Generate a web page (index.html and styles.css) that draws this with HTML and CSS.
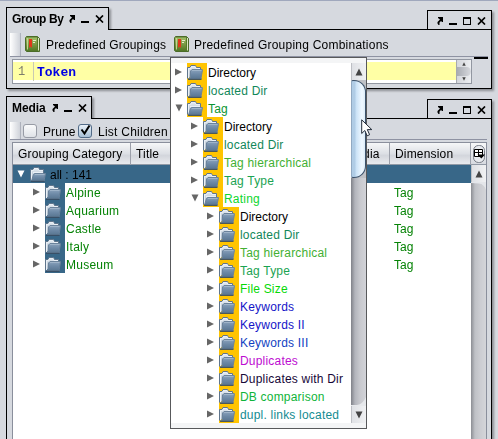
FILE: index.html
```html
<!DOCTYPE html>
<html lang="en">
<head>
<meta charset="utf-8">
<title>Media browser</title>
<link rel="stylesheet" href="styles.css">
</head>
<body>
<svg class="defs" width="0" height="0">
  <defs>
    <linearGradient id="front" x1="0" y1="0" x2="0" y2="1"><stop offset="0" stop-color="#8ba3bd"/><stop offset=".5" stop-color="#6d89a6"/><stop offset="1" stop-color="#587590"/></linearGradient>
    <linearGradient id="back" x1="0" y1="0" x2="0" y2="1"><stop offset="0" stop-color="#e9eff5"/><stop offset="1" stop-color="#9fb0c1"/></linearGradient>
    <linearGradient id="cover" x1="0" y1="0" x2="0" y2="1"><stop offset="0" stop-color="#a3bd68"/><stop offset="1" stop-color="#567c26"/></linearGradient>
    <symbol id="folder" viewBox="0 0 16 16">
      <path d="M.5 14.500V3.500H3L4 1.500H8.500L9.500 3.500H13.500V6" fill="url(#back)" stroke="#5f758c"/>
      <path d="M1.500 14V4.500H3.500L4.500 2.500H8L9 4.500H13" fill="none" stroke="#eaf0f6"/>
      <path d="M1.500 15L3.500 13V7L5 5.500H15.300V7L14.200 13.500V15Z" fill="url(#front)" stroke="#6b839c"/>
      <path d="M1 15.300H14.500" stroke="#33475c"/>
      <path d="M5 6.500H14.500" stroke="#9fb4c9"/>
    </symbol>
    <symbol id="folder-open" viewBox="0 0 16 16">
      <path d="M.5 14.500V3.500H3L4 1.500H8.500L9.500 3.500H13.500V8" fill="url(#back)" stroke="#5f758c"/>
      <path d="M1.500 14V4.500H3.500L4.500 2.500H8L9 4.500H13M3 6.500H13" fill="none" stroke="#eaf0f6"/>
      <path d="M1.500 15L3.500 8.500L4.500 7.500H15.500L14.300 13.500V15Z" fill="url(#front)" stroke="#6b839c"/>
      <path d="M1 15.300H14.500" stroke="#33475c"/>
      <path d="M5 8.500H14.500" stroke="#9fb4c9"/>
    </symbol>
    <symbol id="book" viewBox="0 0 15 16">
      <path d="M.5 2L1.500.5H12.500L14.500 2.500V15.500H1.500L.5 14.500Z" fill="#557a2b" stroke="#4b6c28"/>
      <path d="M13.500 2V14.500" stroke="#dbe7bd"/>
      <path d="M1 1.500H12V14H1Z" fill="url(#cover)"/>
      <path d="M2.500 2V13.500" stroke="#c1d48f"/>
      <path d="M4 3H7V12L5.500 10.500L4 12Z" fill="#e0371b"/>
      <path d="M8 4.500H11M8 6.500H10" stroke="#e4edcb"/>
    </symbol>
    <symbol id="detach" viewBox="0 0 6 8"><path d="M1 0H6V5H5L4 4L2.500 5.500V8H1.500L.5 6.500V5L3 2.500L1 1Z"/></symbol>
    <symbol id="min" viewBox="0 0 8 8"><path d="M0 6H8V8H0Z"/></symbol>
    <symbol id="max" viewBox="0 0 8 8"><path d="M0 0H8V8H0ZM1 2V7H7V2Z" fill-rule="evenodd"/></symbol>
    <symbol id="close" viewBox="0 0 9 8"><path d="M1 .5L8 7.500M8 .5L1 7.500" stroke="#000" stroke-width="1.700"/></symbol>
    <symbol id="right" viewBox="0 0 8 8"><path d="M0 .5L7 4L0 7.500Z" fill="#666"/></symbol>
    <symbol id="down" viewBox="0 0 8 8"><path d="M.5 .5H7.500L4 7.500Z" fill="currentColor"/></symbol>
    <symbol id="up" viewBox="0 0 8 8"><path d="M.5 7.500H7.500L4 .5Z" fill="currentColor"/></symbol>
  </defs>
</svg>

<section class="panel group">
  <header class="tabs">
    <div class="tab"><b>Group By</b><svg class="i-detach"><use href="#detach"/></svg><svg class="i-min"><use href="#min"/></svg><svg class="i-close"><use href="#close"/></svg></div>
    <div class="rule"></div>
    <div class="controls"><svg class="i-detach"><use href="#detach"/></svg><svg class="i-min"><use href="#min"/></svg><svg class="i-max"><use href="#max"/></svg><svg class="i-close"><use href="#close"/></svg></div>
  </header>
  <div class="body">
    <div class="toolbar">
      <i class="handle"></i>
      <svg class="book"><use href="#book"/></svg><span class="t1">Predefined Groupings</span>
      <svg class="book"><use href="#book"/></svg><span class="t2">Predefined Grouping Combinations</span>
    </div>
    <div class="edit-row">
      <div class="editor">
        <span class="line-no">1</span><code>Token</code>
        <div class="mini-scroll"><svg><use href="#up"/></svg><i></i><svg><use href="#down"/></svg></div>
      </div>
      <i class="dash"></i>
    </div>
  </div>
</section>

<section class="panel media">
  <header class="tabs">
    <div class="tab"><b>Media</b><svg class="i-detach"><use href="#detach"/></svg><svg class="i-min"><use href="#min"/></svg><svg class="i-close"><use href="#close"/></svg></div>
    <div class="rule"></div>
    <div class="controls"><svg class="i-detach"><use href="#detach"/></svg><svg class="i-min"><use href="#min"/></svg><svg class="i-max"><use href="#max"/></svg><svg class="i-close"><use href="#close"/></svg></div>
  </header>
  <div class="body">
    <div class="toolbar">
      <i class="handle"></i>
      <i class="check"></i><span class="prune">Prune</span>
      <i class="check on"><svg viewBox="0 0 14 14"><path d="M3.500 6.500L6.500 10.500L11.500 2.500" fill="none" stroke="#000" stroke-width="2"/></svg></i><span class="list">List Children</span>
    </div>
    <div class="table">
      <div class="main">
        <div class="thead"><span>Grouping Category</span><span>Title</span><span class="mid">Media</span><span>Dimension</span></div>
        <div class="row root"><svg class="arrow"><use href="#down"/></svg><svg class="folder"><use href="#folder-open"/></svg><span>all : 141</span></div>
        <div class="row"><svg class="arrow"><use href="#right"/></svg><i class="cell"><svg class="folder"><use href="#folder"/></svg></i><span class="name">Alpine</span><span>Tag</span></div>
        <div class="row"><svg class="arrow"><use href="#right"/></svg><i class="cell"><svg class="folder"><use href="#folder"/></svg></i><span class="name">Aquarium</span><span>Tag</span></div>
        <div class="row"><svg class="arrow"><use href="#right"/></svg><i class="cell"><svg class="folder"><use href="#folder"/></svg></i><span class="name">Castle</span><span>Tag</span></div>
        <div class="row"><svg class="arrow"><use href="#right"/></svg><i class="cell"><svg class="folder"><use href="#folder"/></svg></i><span class="name">Italy</span><span>Tag</span></div>
        <div class="row"><svg class="arrow"><use href="#right"/></svg><i class="cell"><svg class="folder"><use href="#folder"/></svg></i><span class="name">Museum</span><span>Tag</span></div>
      </div>
      <div class="side">
        <div class="corner"><svg viewBox="0 0 12 18"><rect x=".5" y=".5" width="11" height="17" rx="5" fill="#e9ebef" stroke="#777c86"/><path d="M1.500 4.500H9.500V11.500H1.500ZM1.500 7.500H9.500M5.500 4.500V11.500" fill="#fff" stroke="#000"/><path d="M4.500 9.500H12L8.250 13.500Z"/></svg></div>
        <div class="sbtn"><svg><use href="#up"/></svg></div>
        <div class="track"><svg viewBox="0 0 15 9"><path d="M0 0H15V8Q13 2 8 1.500L0 1Z" fill="#e4e6ea"/></svg></div>
      </div>
    </div>
  </div>
</section>

<div class="popup">
  <div class="items">
    <div class="item"><svg class="arrow"><use href="#right"/></svg><i class="cell"><svg class="folder"><use href="#folder"/></svg></i><span class="black">Directory</span></div>
    <div class="item"><svg class="arrow"><use href="#right"/></svg><i class="cell"><svg class="folder"><use href="#folder"/></svg></i><span class="sea">located Dir</span></div>
    <div class="item"><svg class="arrow"><use href="#down"/></svg><i class="cell"><svg class="folder"><use href="#folder-open"/></svg></i><span class="green">Tag</span></div>
    <div class="item l2"><svg class="arrow"><use href="#right"/></svg><i class="cell"><svg class="folder"><use href="#folder"/></svg></i><span class="black">Directory</span></div>
    <div class="item l2"><svg class="arrow"><use href="#right"/></svg><i class="cell"><svg class="folder"><use href="#folder"/></svg></i><span class="sea">located Dir</span></div>
    <div class="item l2"><svg class="arrow"><use href="#right"/></svg><i class="cell"><svg class="folder"><use href="#folder"/></svg></i><span class="leaf">Tag hierarchical</span></div>
    <div class="item l2"><svg class="arrow"><use href="#right"/></svg><i class="cell"><svg class="folder"><use href="#folder"/></svg></i><span class="jade">Tag Type</span></div>
    <div class="item l2"><svg class="arrow"><use href="#down"/></svg><i class="cell"><svg class="folder"><use href="#folder-open"/></svg></i><span class="bright">Rating</span></div>
    <div class="item l3"><svg class="arrow"><use href="#right"/></svg><i class="cell"><svg class="folder"><use href="#folder"/></svg></i><span class="black">Directory</span></div>
    <div class="item l3"><svg class="arrow"><use href="#right"/></svg><i class="cell"><svg class="folder"><use href="#folder"/></svg></i><span class="sea">located Dir</span></div>
    <div class="item l3"><svg class="arrow"><use href="#right"/></svg><i class="cell"><svg class="folder"><use href="#folder"/></svg></i><span class="leaf">Tag hierarchical</span></div>
    <div class="item l3"><svg class="arrow"><use href="#right"/></svg><i class="cell"><svg class="folder"><use href="#folder"/></svg></i><span class="jade">Tag Type</span></div>
    <div class="item l3"><svg class="arrow"><use href="#right"/></svg><i class="cell"><svg class="folder"><use href="#folder"/></svg></i><span class="lime">File Size</span></div>
    <div class="item l3"><svg class="arrow"><use href="#right"/></svg><i class="cell"><svg class="folder"><use href="#folder"/></svg></i><span class="blue">Keywords</span></div>
    <div class="item l3"><svg class="arrow"><use href="#right"/></svg><i class="cell"><svg class="folder"><use href="#folder"/></svg></i><span class="blue">Keywords II</span></div>
    <div class="item l3"><svg class="arrow"><use href="#right"/></svg><i class="cell"><svg class="folder"><use href="#folder"/></svg></i><span class="azure">Keywords III</span></div>
    <div class="item l3"><svg class="arrow"><use href="#right"/></svg><i class="cell"><svg class="folder"><use href="#folder"/></svg></i><span class="magenta">Duplicates</span></div>
    <div class="item l3"><svg class="arrow"><use href="#right"/></svg><i class="cell"><svg class="folder"><use href="#folder"/></svg></i><span class="ink">Duplicates with Dir</span></div>
    <div class="item l3"><svg class="arrow"><use href="#right"/></svg><i class="cell"><svg class="folder"><use href="#folder"/></svg></i><span class="grass">DB comparison</span></div>
    <div class="item l3"><svg class="arrow"><use href="#right"/></svg><i class="cell"><svg class="folder"><use href="#folder"/></svg></i><span class="teal">dupl. links located</span></div>
  </div>
  <div class="bar">
    <div class="sbtn"><svg><use href="#up"/></svg></div>
    <div class="thumb"></div>
    <div class="groove"><svg viewBox="0 0 15 9"><path d="M0 9V8H6Q12 7 15 0V9Z" fill="#e6e8eb"/></svg></div>
    <div class="sbtn"><svg><use href="#down"/></svg></div>
  </div>
</div>
<svg class="cursor" viewBox="0 0 12 18"><path d="M.7 .8V14.500L3.800 11.500L6.200 16.800L8.600 15.700L6.300 10.600H10.800Z" fill="#fff" stroke="#222b38"/></svg>
</body>
</html>
```

FILE: styles.css
```css
* { box-sizing: border-box; }
html { height: 439px; overflow: hidden; }
body {
  margin: 0; height: 439px; overflow: hidden; position: relative;
  padding: 6px 6px 0; border-top: 1px solid #a0a8bd;
  background: #d6d9df; color: #000;
  font: 12px/18px "Liberation Sans", Arial, sans-serif;
}
svg { display: block; flex: none; }
.defs { position: absolute; }
i { font-style: normal; display: block; flex: none; }
span { white-space: nowrap; }

.panel { width: 486px; display: flex; flex-direction: column; }
.group { height: 82px; filter: drop-shadow(2px 2px 1px #8c8e93); }
.media { height: 356px; margin-top: 7px; filter: drop-shadow(2px 2px 1px #8c8e93); }
.tabs { display: flex; flex: none; height: 23px; }
.tab {
  display: flex; align-items: center; width: 103px; padding: 0 0 1px 5px;
  background: #d6d9df; border: 1px solid #000; border-bottom: 0;
}
.tab b { width: 57px; letter-spacing: -.4px; white-space: nowrap; }
.media .tab { width: 86px; }
.media .tab b { width: 40px; letter-spacing: -.1px; }
.rule { flex: 1; border-bottom: 1px solid #000; }
.controls {
  display: flex; align-items: center; width: 65px; height: 20px; margin-top: 3px; padding: 1px 0 0 9px;
  background: #d6d9df; border: 1px solid #000;
}
.i-detach { width: 6px; height: 8px; margin-right: 6px; }
.i-min { width: 8px; height: 8px; margin-right: 6px; }
.i-max { width: 8px; height: 8px; margin-right: 6px; }
.i-close { width: 9px; height: 8px; }

.body { flex: 1; background: #d6d9df; border: 1px solid #000; border-top: 0; padding: 2px 3px 0; }
.media .body { border-bottom: 0; padding: 2px 4px 0 3px; }
.toolbar { display: flex; align-items: center; height: 25px; border-bottom: 1px solid #8e92a2; }
.handle { width: 11px; height: 23px; background: linear-gradient(90deg, #fff, #d0d3da); border-right: 1px solid #aeb2bc; }
.book { width: 15px; height: 16px; margin-left: 4px; }
.toolbar span { padding-top: 2px; }
.t1 { margin-left: 6px; width: 124px; letter-spacing: .17px; }
.t1 + .book { margin-left: 4px; }
.t2 { margin-left: 5px; letter-spacing: .23px; }

.edit-row { display: flex; }
.editor {
  display: flex; width: 461px; height: 25px; margin: 2px 0 0 2px; padding: 2px 0;
  border: 1px solid #9297a1; background: linear-gradient(#fff 2px, #ffffa5 2px 20px, #fff 20px);
  font: 12px/21px "Liberation Mono", "Courier New", monospace;
}
.line-no { width: 21px; padding-left: 5px; color: #7c7c6c; border-right: 1px solid #c9c9b2; }
.editor code { flex: 1; padding-left: 3px; font: bold 13px/21px "Liberation Mono", monospace; color: #0000e6; }
.mini-scroll {
  display: flex; flex-direction: column; align-items: center; justify-content: space-between;
  width: 15px; margin: -2px 0; padding: 2px 0; background: linear-gradient(90deg, #d4d6db, #eceef1); border-left: 1px solid #a6a9b0; color: #444;
}
.mini-scroll svg { width: 6px; height: 4px; }
.mini-scroll i { width: 14px; height: 9px; background: linear-gradient(90deg, #a8abb2, #d8dadf); border-radius: 0 7px 7px 0; }
.dash { width: 14px; height: 2px; margin-left: 2px; background: #000; }

.media .toolbar { height: 19px; }
.media .handle { height: 17px; }
.check { width: 14px; height: 14px; margin: 2px 0 0 2px; border: 1px solid #979ba5; border-radius: 3px; background: linear-gradient(#fafbfc, #dfe2e7); }
.check.on { margin-left: 0; border-color: #526b88; background: linear-gradient(#eaf1f8, #a7bfd6); }
.check svg { width: 14px; height: 14px; margin: -2px 0 0 -1px; overflow: visible; }
.toolbar .prune { margin-left: 6px; width: 35px; padding-top: 4px; letter-spacing: .1px; }
.toolbar .list { margin-left: 6px; padding-top: 4px; letter-spacing: .25px; }

.table { display: flex; height: 310px; margin: 2px 0 0 2px; border: 1px solid #8a8f9c; border-bottom: 0; background: #fff; }
.main { width: 458px; color: #068306; }
.thead { display: grid; grid-template-columns: 118px 210px 49px 81px; height: 22px; line-height: 22px; color: #000; border-bottom: 1px solid #929aa6; background: linear-gradient(#f6f7f8, #dde0e5 50%, #d3d6dc 60%, #e9ebee); }
.thead span { padding-left: 5px; border-right: 1px solid #9ca0aa; letter-spacing: .18px; }
.row { display: flex; align-items: center; height: 18px; padding-left: 20px; }
.row.root { padding-left: 4px; color: #000; background: #386788; }
.root .arrow { color: #fff; margin-right: 5px; }
.root .folder { margin-right: 4px; }
.arrow { width: 8px; height: 8px; margin-right: 4px; color: #666; }
.folder { width: 16px; height: 16px; }
.cell { width: 20px; height: 18px; padding-top: 1px; background: #386788; }
.row span, .item span { padding-top: 1px; }
.row .name { width: 329px; padding-left: 1px; letter-spacing: .25px; }

.side { width: 15px; display: flex; flex-direction: column; }
.corner { height: 22px; padding: 2px; background: linear-gradient(#f6f7f8, #d7dae0); border-bottom: 1px solid #929aa6; }
.corner svg { width: 12px; height: 18px; }
.sbtn { display: flex; align-items: center; justify-content: center; height: 17px; color: #444; background: linear-gradient(90deg, #dfe1e5, #f0f1f3); border-left: 1px solid #bec0c5; }
.sbtn svg { width: 8px; height: 8px; }
.track { flex: 1; background: linear-gradient(90deg, #8c8e94, #bfc1c6 4px, #cbccd1 9px, #d4d5d9); }
.track svg { width: 15px; height: 9px; }

.popup {
  position: absolute; left: 170px; top: 56px; width: 197px; height: 372px; padding: 5px 0;
  display: flex; border: 1px solid #58595b; background: linear-gradient(#f4f5f6 5px, #fff 5px 365px, #f4f5f6 365px);
}
.items { flex: 1; }
.item { display: flex; align-items: center; height: 18px; padding-left: 4px; }
.l2 { padding-left: 20px; }
.l3 { padding-left: 36px; }
.item .cell { background: #ffc400; }
.item span { margin-left: 1px; letter-spacing: .2px; }
.item .black { letter-spacing: 0; }
.bar { width: 15px; display: flex; flex-direction: column; background: #bfc1c6; }
.thumb { height: 98px; border: 1px solid #3c526b; border-left-color: #91a9c2; border-radius: 2px 12px 12px 2px; background: linear-gradient(90deg, #b0cce5 0 3px, #c9e1f6 4px, #eff8ff 10px, #dcecf8); }
.groove { flex: 1; display: flex; align-items: flex-end; background: linear-gradient(90deg, #808289, #b3b5bc 4px, #c8c9ce 9px, #d2d3d8); }
.groove svg { width: 15px; height: 9px; }
.cursor { position: absolute; left: 361px; top: 118px; width: 12px; height: 18px; }

.black { color: #000; }
.sea { color: #12875a; }
.green { color: #0b9430; }
.leaf { color: #43b033; }
.jade { color: #1ba352; }
.bright { color: #0ed62e; }
.lime { color: #05d905; }
.blue { color: #1414c8; }
.azure { color: #123fc2; }
.magenta { color: #bd0bd1; }
.ink { color: #170838; }
.grass { color: #0fb43a; }
.teal { color: #148c92; }
```
